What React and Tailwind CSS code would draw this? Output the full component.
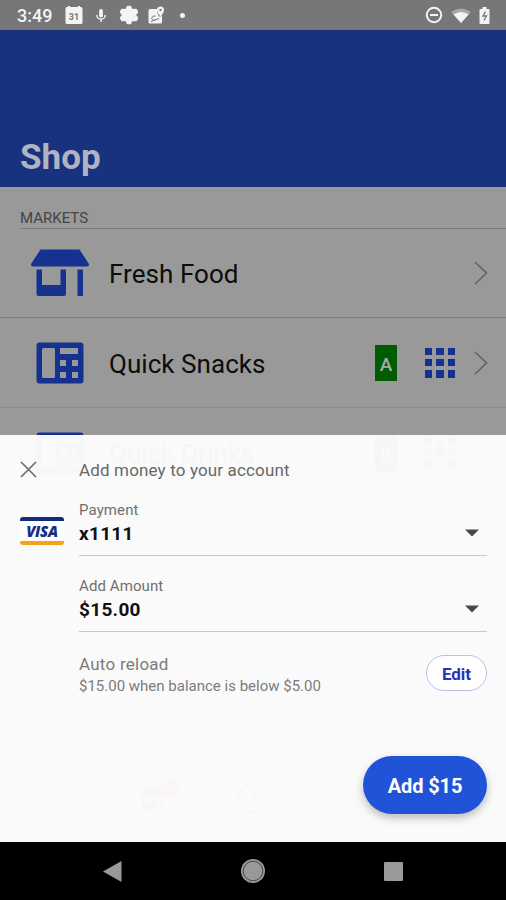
import clsx from "clsx";

const MARKETS = [
  { name: "Fresh Food", kind: "store" },
  { name: "Quick Snacks", kind: "vending", badge: "A", badgeClass: "bg-[#005c00]" },
  { name: "Quick Drinks", kind: "vending", badge: "B", badgeClass: "bg-[#0a0a8c]" },
];

const FIELDS = [
  { label: "Payment", value: "x1111", visa: true },
  { label: "Add Amount", value: "$15.00" },
];

function StoreIcon({ className }) {
  return (
    <svg viewBox="0 0 60 48" className={className} fill="currentColor">
      <path d="M10.500 .5h39L59 15q0 2.500-1.500 2.500h-55Q1 17.500 1 15z" />
      <path fillRule="evenodd" d="M6.500 20.500h5.500V36h18.500V20.500h5.500V45q0 2-2 2H8.500q-2 0-2-2z" />
      <path d="M47.500 20.500H53V47h-5.500z" />
    </svg>
  );
}

function VendingIcon({ className }) {
  return (
    <svg viewBox="0 0 48 42" className={className} fill="currentColor">
      <path
        fillRule="evenodd"
        d="M3.500.5h41q3 0 3 3v35q0 3-3 3h-41q-3 0-3-3v-35q0-3 3-3zM7.500 6Q6 6 6 7.500v27Q6 36 7.500 36h10q1.500 0 1.500-1.500v-27Q19 6 17.500 6zM24 6v6h18V6zM24 18v6h6v-6zM36 18v6h6v-6zM24 30v6h6v-6zM36 30v6h6v-6z"
      />
    </svg>
  );
}

function GridIcon() {
  return (
    <div className="grid h-[30px] w-[30px] grid-cols-3 gap-1">
      {Array.from({ length: 9 }, (_, i) => (
        <span key={i} className="bg-[#153291]" />
      ))}
    </div>
  );
}

function StatusBar() {
  return (
    <div className="flex h-[30px] shrink-0 items-center bg-[#777] pl-[17px] text-[#f4f4f4]">
      <span className="w-[48px] pt-0.5 text-[18px] leading-none font-medium">3:49</span>
      <svg viewBox="0 0 18 18" className="h-[18px] w-[18px]">
        <path fill="currentColor" d="M2 1h1V0h2v1h8V0h2v1h1q1.500 0 1.500 1.500v14Q17.500 18 16 18H2Q.5 18 .5 16.500v-14Q.5 1 2 1z" />
        <text x="9" y="13.500" textAnchor="middle" fontSize="9" fontWeight="700" fill="#777">31</text>
      </svg>
      <svg viewBox="0 0 12 16" className="ml-3 h-[15px] w-3" fill="none" stroke="currentColor">
        <path d="M6 3v5" strokeWidth="4" strokeLinecap="round" />
        <path d="M1.500 7.500a4.500 4.500 0 0 0 9 0M6 12v3" strokeWidth="1.500" />
      </svg>
      <svg viewBox="0 0 20 20" className="ml-3 h-5 w-5" fill="currentColor" stroke="currentColor" strokeWidth="1.500" strokeLinejoin="round">
        <path d="M8.500 1.500h3L13 4.800l4-.3 1.500 2.500L16.200 10l2.300 3-1.500 2.500-4-.3-1.500 3.300h-3L7 15.200l-4 .3L1.500 13l2.300-3L1.500 7 3 4.500l4 .3z" />
      </svg>
      <svg viewBox="0 0 17 18" className="ml-[9px] h-[18px] w-[17px]">
        <path fill="currentColor" d="M2 3h7q0 6 3 8l2-2v7q0 1.500-1.500 1.500H2Q.5 17.500.5 16V4.500Q.5 3 2 3z" />
        <path fill="currentColor" fillRule="evenodd" d="M12.500.5a3.500 3.500 0 0 1 3.500 3.500q0 2.500-3.500 6.500Q9 6.500 9 4A3.500 3.500 0 0 1 12.500.5zm0 2.200a1.200 1.200 0 1 0 0 2.400 1.200 1.200 0 0 0 0-2.400z" />
        <path d="M7.500 10H6a2.200 2.200 0 1 0 1.800 3.500M3 15.500l8-3" fill="none" stroke="#777" />
      </svg>
      <span className="ml-[15px] h-[5px] w-[5px] rounded-full bg-[#f4f4f4]" />
      <svg viewBox="0 0 18 18" className="ml-auto h-[18px] w-[18px]" fill="none" stroke="currentColor" strokeWidth="2">
        <circle cx="9" cy="9" r="7.200" />
        <path d="M5 9h8" />
      </svg>
      <svg viewBox="0 0 20 15" className="ml-2 h-[15px] w-5" fill="currentColor">
        <path opacity=".4" d="M0 4Q10-3 20 4L10 15z" />
        <path d="M2.500 6.500q7.500-5 15 0L10 15z" />
      </svg>
      <svg viewBox="0 0 11 17" className="mr-4 ml-2 h-[17px] w-[11px]">
        <path fill="currentColor" d="M3.500 0h4v2H9.500q1 0 1 1v13q0 1-1 1h-8q-1 0-1-1V3q0-1 1-1h2z" />
        <path d="M6.500 4.500 4 9h3.500L5 13.500" fill="none" stroke="#777" strokeWidth="1.300" />
      </svg>
    </div>
  );
}

function MarketRow({ name, kind, badge, badgeClass, first }) {
  return (
    <div className={clsx("flex shrink-0 items-center border-b pr-[18px]", first ? "h-[89px] border-[#7e7e7e]" : "h-[90px] border-[#8a8a8a]")}>
      <div className="flex w-[109px] items-center pl-[30px] text-[#153291]">
        {kind === "store" ? <StoreIcon className="h-12 w-[60px]" /> : <VendingIcon className="ml-1.5 h-[42px] w-12" />}
      </div>
      <span className="flex-1 pt-[2px] text-[26px] leading-none tracking-[0.05px] text-[#0c0c0c]">{name}</span>
      {badge && (
        <>
          <span className={clsx("mr-[28px] flex h-9 w-[22px] items-center justify-center pt-1 text-[19px] leading-none font-medium text-[#aaa]", badgeClass)}>
            {badge}
          </span>
          <GridIcon />
        </>
      )}
      <svg viewBox="0 0 14 24" className="ml-[19px] h-6 w-3.5" fill="none" stroke="#626262" strokeWidth="1.600">
        <path d="M1 1l11.500 11L1 23" />
      </svg>
    </div>
  );
}

function TabBar() {
  return (
    <div className="mt-auto flex h-[88px] shrink-0 items-center px-[38px] text-[#777]">
      <svg viewBox="0 0 28 24" className="h-6 w-7" fill="#777">
        <path d="M14 0 28 13h-4v11h-7v-8h-6v8H4V13H0z" />
      </svg>
      <div className="relative mt-1 ml-[73px] text-[#153291]">
        <StoreIcon className="h-6 w-7" />
        <span className="absolute -top-2 left-[22px] h-[18px] w-[18px] rounded-full bg-[#a02020]" />
      </div>
      <div className="ml-[56px] flex h-[60px] w-[60px] items-center justify-center rounded-full border-2 border-[#555]">
        <span className="flex h-[30px] w-[30px] items-center justify-center rounded-full border-2 border-[#444]">
          <svg viewBox="0 0 8 16" className="h-4 w-2" fill="none" stroke="#333" strokeWidth="2">
            <path d="M1 2h3a2.500 2.500 0 0 1 0 6 2.500 2.500 0 0 1 0 6H1" />
          </svg>
        </span>
      </div>
      <svg viewBox="0 0 28 24" className="ml-[56px] h-6 w-7" fill="#888">
        <path d="M0 2h28v20H0z" />
      </svg>
    </div>
  );
}

function VisaCard() {
  return (
    <div className="mt-[17px] flex h-[28px] w-11 flex-col justify-between overflow-hidden rounded-[3px] bg-white">
      <span className="h-1 bg-[#122b7c]" />
      <span className="text-center font-['Open_Sans',sans-serif] text-[15px] leading-none font-extrabold tracking-[-0.3px] text-[#182c86] italic">VISA</span>
      <span className="h-1 bg-[#f8a01b]" />
    </div>
  );
}

function Field({ label, value, visa }) {
  return (
    <div className="flex h-[76px] pr-[19px] pl-5">
      <div className="w-[59px]">{visa && <VisaCard />}</div>
      <div className="h-[56px] flex-1 border-b border-[#c8c8c8]">
        <div className="text-[15px] leading-[20px] tracking-[0.1px] text-[#707070]">{label}</div>
        <div className="flex items-center justify-between pr-2">
          <span className="text-[19px] leading-[28px] font-bold tracking-[0.3px] text-[#111]">{value}</span>
          <svg viewBox="0 0 14 8" className="-mt-0.5 h-2 w-3.5" fill="#484848">
            <path d="M0 .5h14L7 7.500z" />
          </svg>
        </div>
      </div>
    </div>
  );
}

function AddMoneySheet() {
  return (
    <div className="absolute inset-x-0 top-[435px] flex h-[407px] flex-col bg-[#fcfcfc]/[0.975]">
      <div className="mb-4 flex h-[49px] items-center border-b border-[#f5f5f5] pt-[20px] pl-5">
        <svg viewBox="0 0 17 17" className="h-[17px] w-[17px]" fill="none" stroke="#707070" strokeWidth="1.700">
          <path d="M1 1l15 15M16 1 1 16" />
        </svg>
        <span className="ml-[42px] pt-0.5 text-[17px] leading-none tracking-[0.15px] text-[#686868]">Add money to your account</span>
      </div>
      {FIELDS.map((f) => (
        <Field key={f.label} {...f} />
      ))}
      <div className="flex items-start justify-between pr-[19px] pl-[79px]">
        <div className="pt-px">
          <div className="text-[17px] leading-[22px] tracking-[0.25px] text-[#7c7c7c]">Auto reload</div>
          <div className="text-[15px] leading-[22px] text-[#7c7c7c]">$15.00 when balance is below $5.00</div>
        </div>
        <button className="mt-[3px] h-9 w-[61px] rounded-full border border-[#b8bfe8] bg-white pt-0.5 text-[17px] leading-none font-bold text-[#2535ba]">
          Edit
        </button>
      </div>
      <button className="mt-auto mr-[19px] mb-[28px] h-[58px] w-[124px] self-end rounded-full bg-[#2153d9] pt-0.5 text-[20px] font-bold tracking-[-0.1px] text-white shadow-[0_4px_8px_rgba(0,0,0,0.25)]">
        Add $15
      </button>
    </div>
  );
}

function NavBar() {
  return (
    <div className="flex h-[58px] shrink-0 items-center justify-between bg-black pr-[103px] pl-[103px] text-[#999]">
      <svg viewBox="0 0 19 21" className="h-[21px] w-[19px]" fill="currentColor">
        <path d="M18.500 0v21L0 10.500z" />
      </svg>
      <svg viewBox="0 0 24 24" className="h-6 w-6" fill="currentColor">
        <circle cx="12" cy="12" r="12" />
        <circle cx="12" cy="12" r="9.800" fill="none" stroke="#333" strokeWidth=".8" />
      </svg>
      <span className="h-[19px] w-[19px] rounded-[1px] bg-[#999]" />
    </div>
  );
}

export default function App() {
  return (
    <div className="relative flex h-[900px] w-[506px] flex-col overflow-hidden bg-[#999] font-['Roboto',sans-serif]">
      <StatusBar />
      <header className="flex h-[157px] shrink-0 items-end bg-[#183280] px-5 pb-[9px]">
        <h1 className="text-[35px] leading-[40px] font-bold text-[#b0b4c0]">Shop</h1>
      </header>
      <div className="ml-5 flex h-[42px] shrink-0 items-end border-b border-[#7e7e7e] pb-px text-[15px] leading-[17px] text-[#444]">
        MARKETS
      </div>
      {MARKETS.map((m, i) => (
        <MarketRow key={m.name} {...m} first={i === 0} />
      ))}
      <TabBar />
      <NavBar />
      <AddMoneySheet />
    </div>
  );
}
